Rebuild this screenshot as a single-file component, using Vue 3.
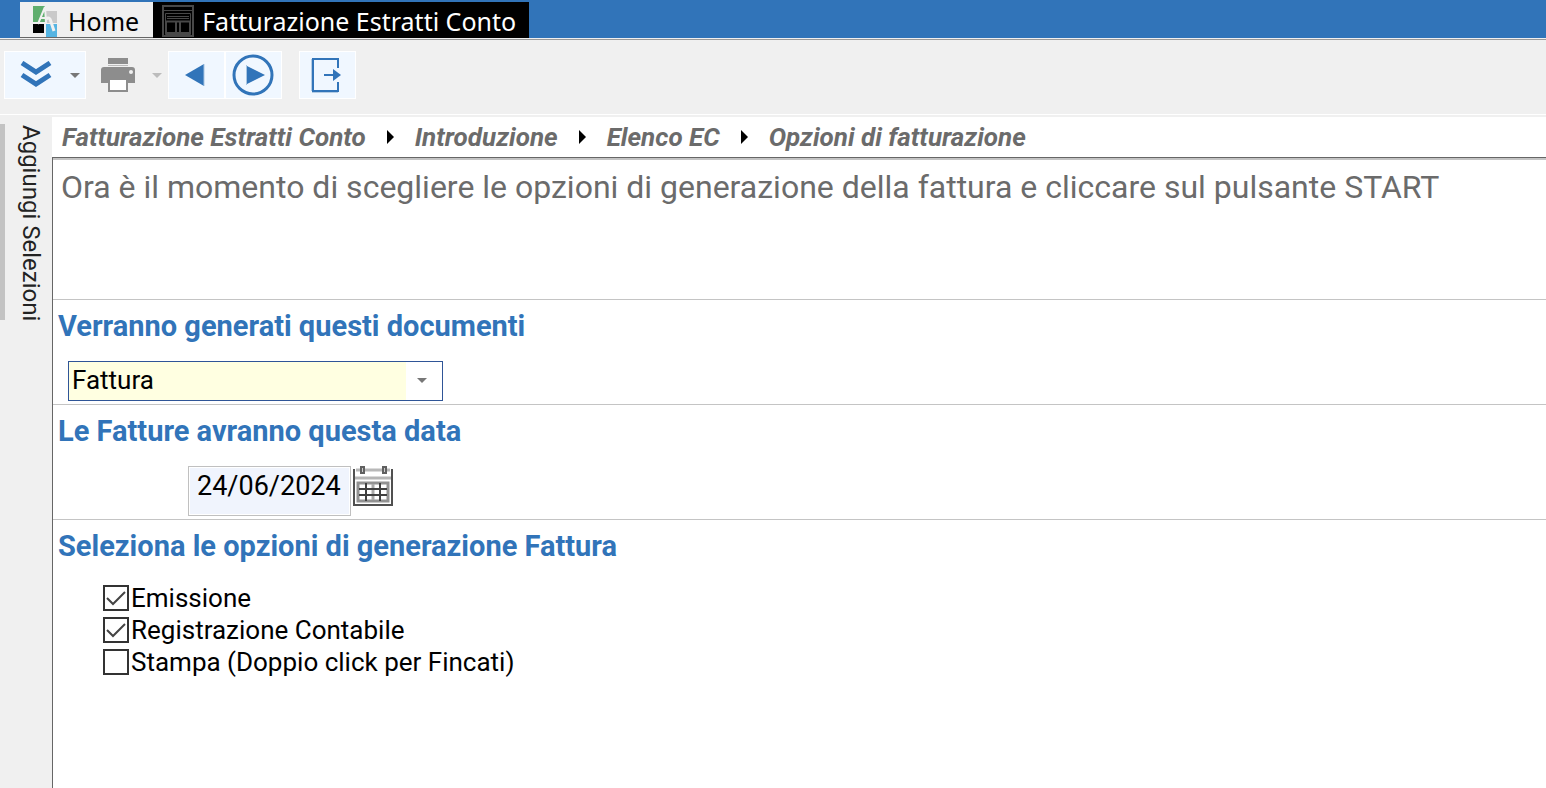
<script setup>
import { ref } from 'vue'

const documentType = ref('Fattura')
const invoiceDate = ref('24/06/2024')
const crumbs = ['Fatturazione Estratti Conto', 'Introduzione', 'Elenco EC', 'Opzioni di fatturazione']
const options = ref([
  { id: 'emissione', label: 'Emissione', checked: true },
  { id: 'registrazione', label: 'Registrazione Contabile', checked: true },
  { id: 'stampa', label: 'Stampa (Doppio click per Fincati)', checked: false }
])
</script>

<template>
  <div class="app">
    <nav class="tabs">
      <button type="button" class="tab tab-home">
        <svg class="logo" width="24" height="32" viewBox="0 0 24 32" aria-hidden="true">
          <path d="M0 1H12V17H0Z" fill="#5fae6e" />
          <path d="M13 6H24V18H13Z" fill="#c9c9c9" />
          <path d="M0 19H11V28H0Z" fill="#000" />
          <path d="M13 19H24V32H13Z" fill="#55b4e2" />
          <path d="M5 19L12 2L13 18M8 13H13" fill="none" stroke="#f0f0f0" stroke-width="2" />
          <path d="M13 14Q17 11 18 17L21 26" fill="none" stroke="#f0f0f0" stroke-width="3" />
        </svg>
        <span>Home</span>
      </button>
      <button type="button" class="tab tab-active">
        <svg width="32" height="32" viewBox="0 0 32 32" fill="none" stroke="#484848" aria-hidden="true">
          <path d="M1 1H31V31H1Z" stroke-width="2" />
          <path d="M2 5.5H30" stroke-width="1" />
          <path d="M3.5 8.5H28.5V29.5H3.5Z" stroke-width="1" />
          <path d="M5 11.5H27M5 13.5H27" stroke-width="1" />
          <path d="M4 16.5H28M4 28H28" stroke-width="2" />
          <path d="M4.5 16V29M27.5 16V29" stroke-width="1" />
          <path d="M14 17V28M18 17V28" stroke-width="2" />
        </svg>
        <span>Fatturazione Estratti Conto</span>
      </button>
    </nav>

    <div class="toolbar" role="toolbar">
      <div class="group lit">
        <button type="button" class="tool main" aria-label="Espandi">
          <svg width="32" height="28" viewBox="0 0 32 28" fill="none" stroke="#3174b9" stroke-width="5">
            <path d="M2 2L16 11L30 2M2 14L16 23L30 14" />
          </svg>
        </button>
        <button type="button" class="tool drop" aria-label="Altre opzioni">
          <svg width="10" height="5" viewBox="0 0 10 5"><path d="M0 0H10L5 5Z" fill="#777" /></svg>
        </button>
      </div>
      <div class="group">
        <button type="button" class="tool main" aria-label="Stampa">
          <svg width="36" height="36" viewBox="0 0 36 36">
            <path d="M8 1H28V7H8Z" fill="#8d8d8d" />
            <path d="M8 8H28V9H8Z" fill="#bbb" />
            <path d="M4 10H32Q35 10 35 13V26H28V22H8V26H1V13Q1 10 4 10Z" fill="#8d8d8d" />
            <path d="M9 22H27V34H9Z" fill="#fff" stroke="#8d8d8d" stroke-width="2" />
            <circle cx="31" cy="15" r="2" fill="#f0f0f0" />
          </svg>
        </button>
        <button type="button" class="tool drop" aria-label="Opzioni di stampa">
          <svg width="10" height="5" viewBox="0 0 10 5"><path d="M0 0H10L5 5Z" fill="#bcbcbc" /></svg>
        </button>
      </div>
      <button type="button" class="tool single lit" aria-label="Indietro">
        <svg width="42" height="42" viewBox="0 0 42 42">
          <path d="M10 21L29 10V32Z" fill="#3174b9" />
          <path d="M29 10V32" stroke="#a9c6e2" stroke-width="1" />
        </svg>
      </button>
      <button type="button" class="tool single lit" aria-label="Avvia">
        <svg width="42" height="42" viewBox="0 0 42 42">
          <circle cx="21" cy="21" r="19" fill="none" stroke="#3174b9" stroke-width="3" />
          <path d="M15 12L33 21L15 30Z" fill="#3174b9" />
          <path d="M14.5 11V31" stroke="#a9c6e2" stroke-width="1" />
        </svg>
      </button>
      <button type="button" class="tool single lit exit" aria-label="Esci">
        <svg width="34" height="36" viewBox="0 0 34 36">
          <path d="M1.5 2V34M2 35.5H28" fill="none" stroke="#b4cce4" stroke-width="1" />
          <path d="M28 11V2H3V34H28V25" fill="none" stroke="#3174b9" stroke-width="2" />
          <path d="M14 18H25" stroke="#3174b9" stroke-width="2" />
          <path d="M23 12L31 18L23 24Z" fill="#3174b9" />
        </svg>
      </button>
    </div>

    <div class="body">
      <aside class="side">
        <button type="button" class="side-tab">Aggiungi Selezioni</button>
      </aside>

      <main class="content">
        <nav class="crumbs">
          <template v-for="(crumb, i) in crumbs" :key="crumb">
            <svg v-if="i" width="7" height="14" viewBox="0 0 7 14" aria-hidden="true"><path d="M0 0L7 7L0 14Z" fill="#000" /></svg>
            <a href="#">{{ crumb }}</a>
          </template>
        </nav>

        <div class="panel">
          <p class="intro">Ora è il momento di scegliere le opzioni di generazione della fattura e cliccare sul pulsante START</p>

          <section class="block">
            <h2><label for="document-type">Verranno generati questi documenti</label></h2>
            <div class="combo">
              <select id="document-type" v-model="documentType">
                <option>Fattura</option>
              </select>
              <svg class="combo-arrow" width="10" height="5" viewBox="0 0 10 5" aria-hidden="true"><path d="M0 0H10L5 5Z" fill="#777" /></svg>
            </div>
          </section>

          <section class="block">
            <h2><label for="invoice-date">Le Fatture avranno questa data</label></h2>
            <div class="date-row">
              <input id="invoice-date" v-model="invoiceDate" type="text" class="date" />
              <button type="button" class="calendar" aria-label="Apri calendario">
                <svg width="40" height="42" viewBox="0 0 40 42" fill="none">
                  <path d="M3 4H37" stroke="#b8b8b8" stroke-width="3" />
                  <path d="M2 12H38" stroke="#b5b5b5" stroke-width="3" />
                  <path d="M1 3V39H39V3" stroke="#505050" stroke-width="2" />
                  <path d="M8 1H11V7H8ZM30 1H33V7H30Z" fill="#ccc" stroke="#606060" stroke-width="2" />
                  <path d="M5 17H35V35H5Z" stroke="#929292" stroke-width="3" />
                  <path d="M20 18V34" stroke="#aaa" stroke-width="3" />
                  <path d="M6 23H34M6 29H34M13 17V35M27 17V35" stroke="#404040" stroke-width="2" />
                </svg>
              </button>
            </div>
          </section>

          <section class="block last">
            <h2>Seleziona le opzioni di generazione Fattura</h2>
            <ul class="options">
              <li v-for="option in options" :key="option.id">
                <label>
                  <span class="box">
                    <input v-model="option.checked" type="checkbox" />
                    <svg v-if="option.checked" class="tick" width="20" height="16" viewBox="0 0 20 16" aria-hidden="true"><path d="M1 8L7 14L19 2" fill="none" stroke="#444" stroke-width="2" /></svg>
                  </span>
                  <span>{{ option.label }}</span>
                </label>
              </li>
            </ul>
          </section>
        </div>
      </main>
    </div>
  </div>
</template>

<style>
body {
  background: #f0f0f0;
}
</style>

<style scoped>
.app {
  display: flex;
  flex-direction: column;
  min-height: 100vh;
  background: #f0f0f0;
  color: #000;
  font-family: Roboto, "Liberation Sans", sans-serif;
}
.app *, .app {
  box-sizing: border-box;
}
button {
  border: 0;
  margin: 0;
  padding: 0;
  background: none;
  color: inherit;
  font: inherit;
}
svg {
  display: block;
  flex: none;
}
.tabs {
  display: flex;
  height: 38px;
  padding: 2px 0 0 20px;
  background: #3174b9;
}
.tab {
  display: flex;
  align-items: center;
  font-family: "Noto Sans", "Open Sans", sans-serif;
  font-size: 25px;
  line-height: 32px;
  white-space: nowrap;
}
.tab-home {
  gap: 11px;
  padding: 2px 14px 0 13px;
  background: #f0f0f0;
  border-bottom: 1px solid #666;
}
.tab-active {
  gap: 8px;
  padding: 2px 13px 0 9px;
  background: #000;
  color: #fff;
}
.toolbar {
  display: flex;
  align-items: flex-start;
  height: 76px;
  padding: 11px 0 0 4px;
  border-top: 1px solid #999;
  border-bottom: 1px solid #fff;
  margin-top: 1px;
}
.group {
  display: flex;
  width: 82px;
  height: 48px;
  border: 1px solid transparent;
}
.tool {
  display: flex;
  align-items: center;
  justify-content: center;
}
.main {
  width: 62px;
}
.drop {
  width: 16px;
}
.single {
  width: 57px;
  height: 48px;
  padding-right: 2px;
}
.lit {
  background: #f0f7ff;
  border: 1px solid #fff;
}
.exit {
  margin-left: 17px;
}
.body {
  display: flex;
  flex: 1;
  padding-top: 2px;
}
.side {
  width: 52px;
  flex: none;
  padding-top: 7px;
}
.side-tab {
  height: 196px;
  padding: 1px 0 0 12px;
  border-left: 5px solid #c3c3c3;
  color: #222;
  font-size: 24px;
  line-height: 28px;
  text-align: left;
  white-space: nowrap;
  writing-mode: vertical-rl;
}
.content {
  display: flex;
  flex: 1;
  flex-direction: column;
  min-width: 0;
  background: #fff;
}
.crumbs {
  display: flex;
  align-items: center;
  height: 40px;
  gap: 21px;
  padding-left: 10px;
}
.crumbs a {
  color: #6b6b6b;
  font-size: 26px;
  font-style: italic;
  font-weight: 700;
  line-height: 32px;
  text-decoration: none;
  white-space: nowrap;
}
.panel {
  flex: 1;
  border-top: 1px solid #666;
  border-left: 1px solid #666;
  box-shadow: inset 0 2px #c4c4c4;
}
.intro {
  min-height: 142px;
  margin: 0;
  padding: 9px 8px;
  border-bottom: 1px solid #c4c4c4;
  color: #6b6b6b;
  font-size: 32px;
  line-height: 40px;
}
.block {
  padding: 8px 5px 3px;
  border-bottom: 1px solid #c4c4c4;
}
.last {
  border-bottom: 0;
}
h2 {
  margin: 0;
  color: #3174b9;
  font-size: 29px;
  font-weight: 700;
  line-height: 36px;
}
.combo {
  position: relative;
  width: 375px;
  margin: 17px 0 0 10px;
}
select {
  display: block;
  width: 100%;
  height: 40px;
  padding: 0 40px 2px 3px;
  appearance: none;
  border: 1px solid #2f5597;
  border-radius: 0;
  background: linear-gradient(to left, #fff 36px, #ffffe1 36px);
  color: #000;
  font-family: inherit;
  font-size: 26px;
}
.combo-arrow {
  position: absolute;
  top: 17px;
  right: 16px;
  pointer-events: none;
}
.date-row {
  display: flex;
  align-items: flex-start;
  gap: 2px;
  margin: 17px 0 0 130px;
}
.date {
  width: 163px;
  height: 50px;
  padding: 0 8px 10px;
  border: 1px solid #c0c0c0;
  border-radius: 0;
  background: #f0f4fd;
  box-shadow: inset 0 0 0 1px #fff;
  color: #000;
  font-family: inherit;
  font-size: 27px;
}
.options {
  margin: 18px 0 0 45px;
  padding: 0;
  list-style: none;
}
.options label {
  display: flex;
  align-items: center;
  gap: 2px;
  width: fit-content;
  font-size: 26px;
  line-height: 32px;
}
.box {
  position: relative;
  flex: none;
  width: 26px;
  height: 26px;
}
.box input {
  display: block;
  width: 26px;
  height: 26px;
  margin: 0;
  appearance: none;
  border: 2px solid #333;
  background: #fff;
}
.tick {
  position: absolute;
  top: 5px;
  left: 3px;
  pointer-events: none;
}
</style>
